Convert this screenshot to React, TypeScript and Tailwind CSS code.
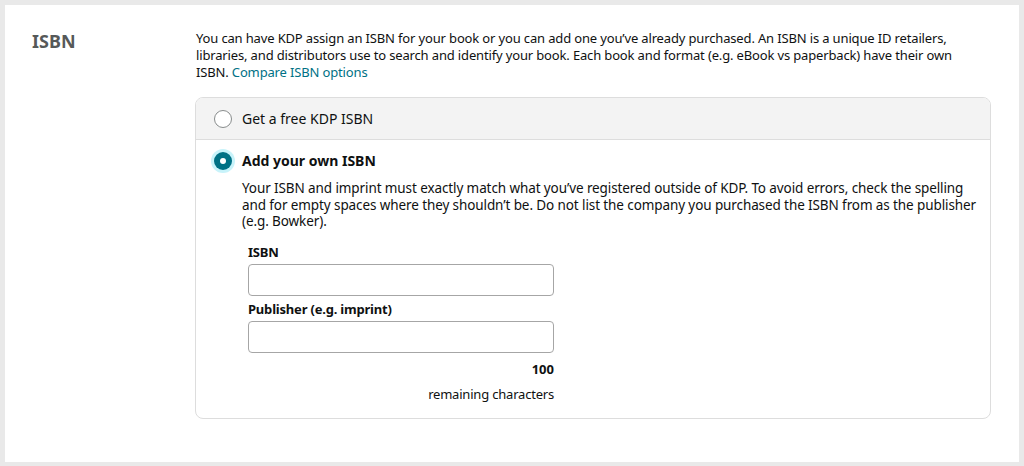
import React from "react";

const font = { fontFamily: '"Noto Sans", "Open Sans", Arial, sans-serif' };

const Radio = ({ checked }: { checked?: boolean }) =>
  checked ? (
    <span className="flex h-[18px] w-[18px] shrink-0 items-center justify-center rounded-full bg-[#007185] ring-[3px] ring-[#c8f3fa]">
      <span className="h-[6px] w-[6px] rounded-full bg-white" />
    </span>
  ) : (
    <span className="h-[18px] w-[18px] shrink-0 rounded-full border border-[#888c8c] bg-white" />
  );

const Field = ({ label }: { label: string }) => (
  <div>
    <p className="text-[13px] font-bold leading-[20px] tracking-[-0.2px] text-[#0f1111]">{label}</p>
    <input
      type="text"
      className="mt-[2px] block h-[32px] w-[306px] rounded-[4px] border border-[#a6a6a6] bg-white px-2 outline-none"
    />
  </div>
);

export default function App() {
  return (
    <div className="h-[466px] bg-[#e9e9e9] p-[5px] pb-[4px]" style={font}>
      <div className="flex h-full bg-white">
        <div className="w-[191px] shrink-0 pl-[27px] pt-[23px]">
          <h2 className="text-[18px] font-bold text-[#565959]">ISBN</h2>
        </div>
        <div className="flex-1 pr-[40px] pt-[25px]">
          <p className="text-[13px] leading-[17px] tracking-[-0.15px] text-[#0f1111]">
            You can have KDP assign an ISBN for your book or you can add one you’ve already purchased. An ISBN is a
            unique ID retailers, libraries, and distributors use to search and identify your book. Each book and format
            (e.g. eBook vs paperback) have their own ISBN.{" "}
            <a className="text-[#007185]">Compare ISBN options</a>
          </p>
          <div className="ml-[-1px] mr-[-12px] mt-[16px] overflow-hidden rounded-lg border border-[#dddddd]">
            <div className="flex h-[42px] items-center gap-[10px] border-b border-[#dddddd] bg-[#f3f3f3] pl-[18px]">
              <Radio />
              <span className="text-[14px] text-[#0f1111]">Get a free KDP ISBN</span>
            </div>
            <div className="pb-[14px] pl-[18px] pr-[4px] pt-[10px]">
              <div className="flex items-center gap-[10px]">
                <Radio checked />
                <span className="text-[14px] font-bold text-[#0f1111]">Add your own ISBN</span>
              </div>
              <div className="pl-[28px]">
                <p className="mt-[9px] text-[13.5px] leading-[16.5px] tracking-[-0.1px] text-[#0f1111]">
                  Your ISBN and imprint must exactly match what you’ve registered outside of KDP. To avoid errors, check
                  the spelling and for empty spaces where they shouldn’t be. Do not list the company you purchased the
                  ISBN from as the publisher (e.g. Bowker).
                </p>
                <div className="mt-[12px] flex w-[312px] flex-col gap-[3px] pl-[6px]">
                  <Field label="ISBN" />
                  <Field label="Publisher (e.g. imprint)" />
                  <p className="mt-[3px] text-right text-[13px] font-bold leading-[20px] text-[#0f1111]">100</p>
                  <p className="mt-[2px] text-right text-[13px] leading-[20px] tracking-[-0.2px] text-[#0f1111]">
                    remaining characters
                  </p>
                </div>
              </div>
            </div>
          </div>
        </div>
      </div>
    </div>
  );
}
